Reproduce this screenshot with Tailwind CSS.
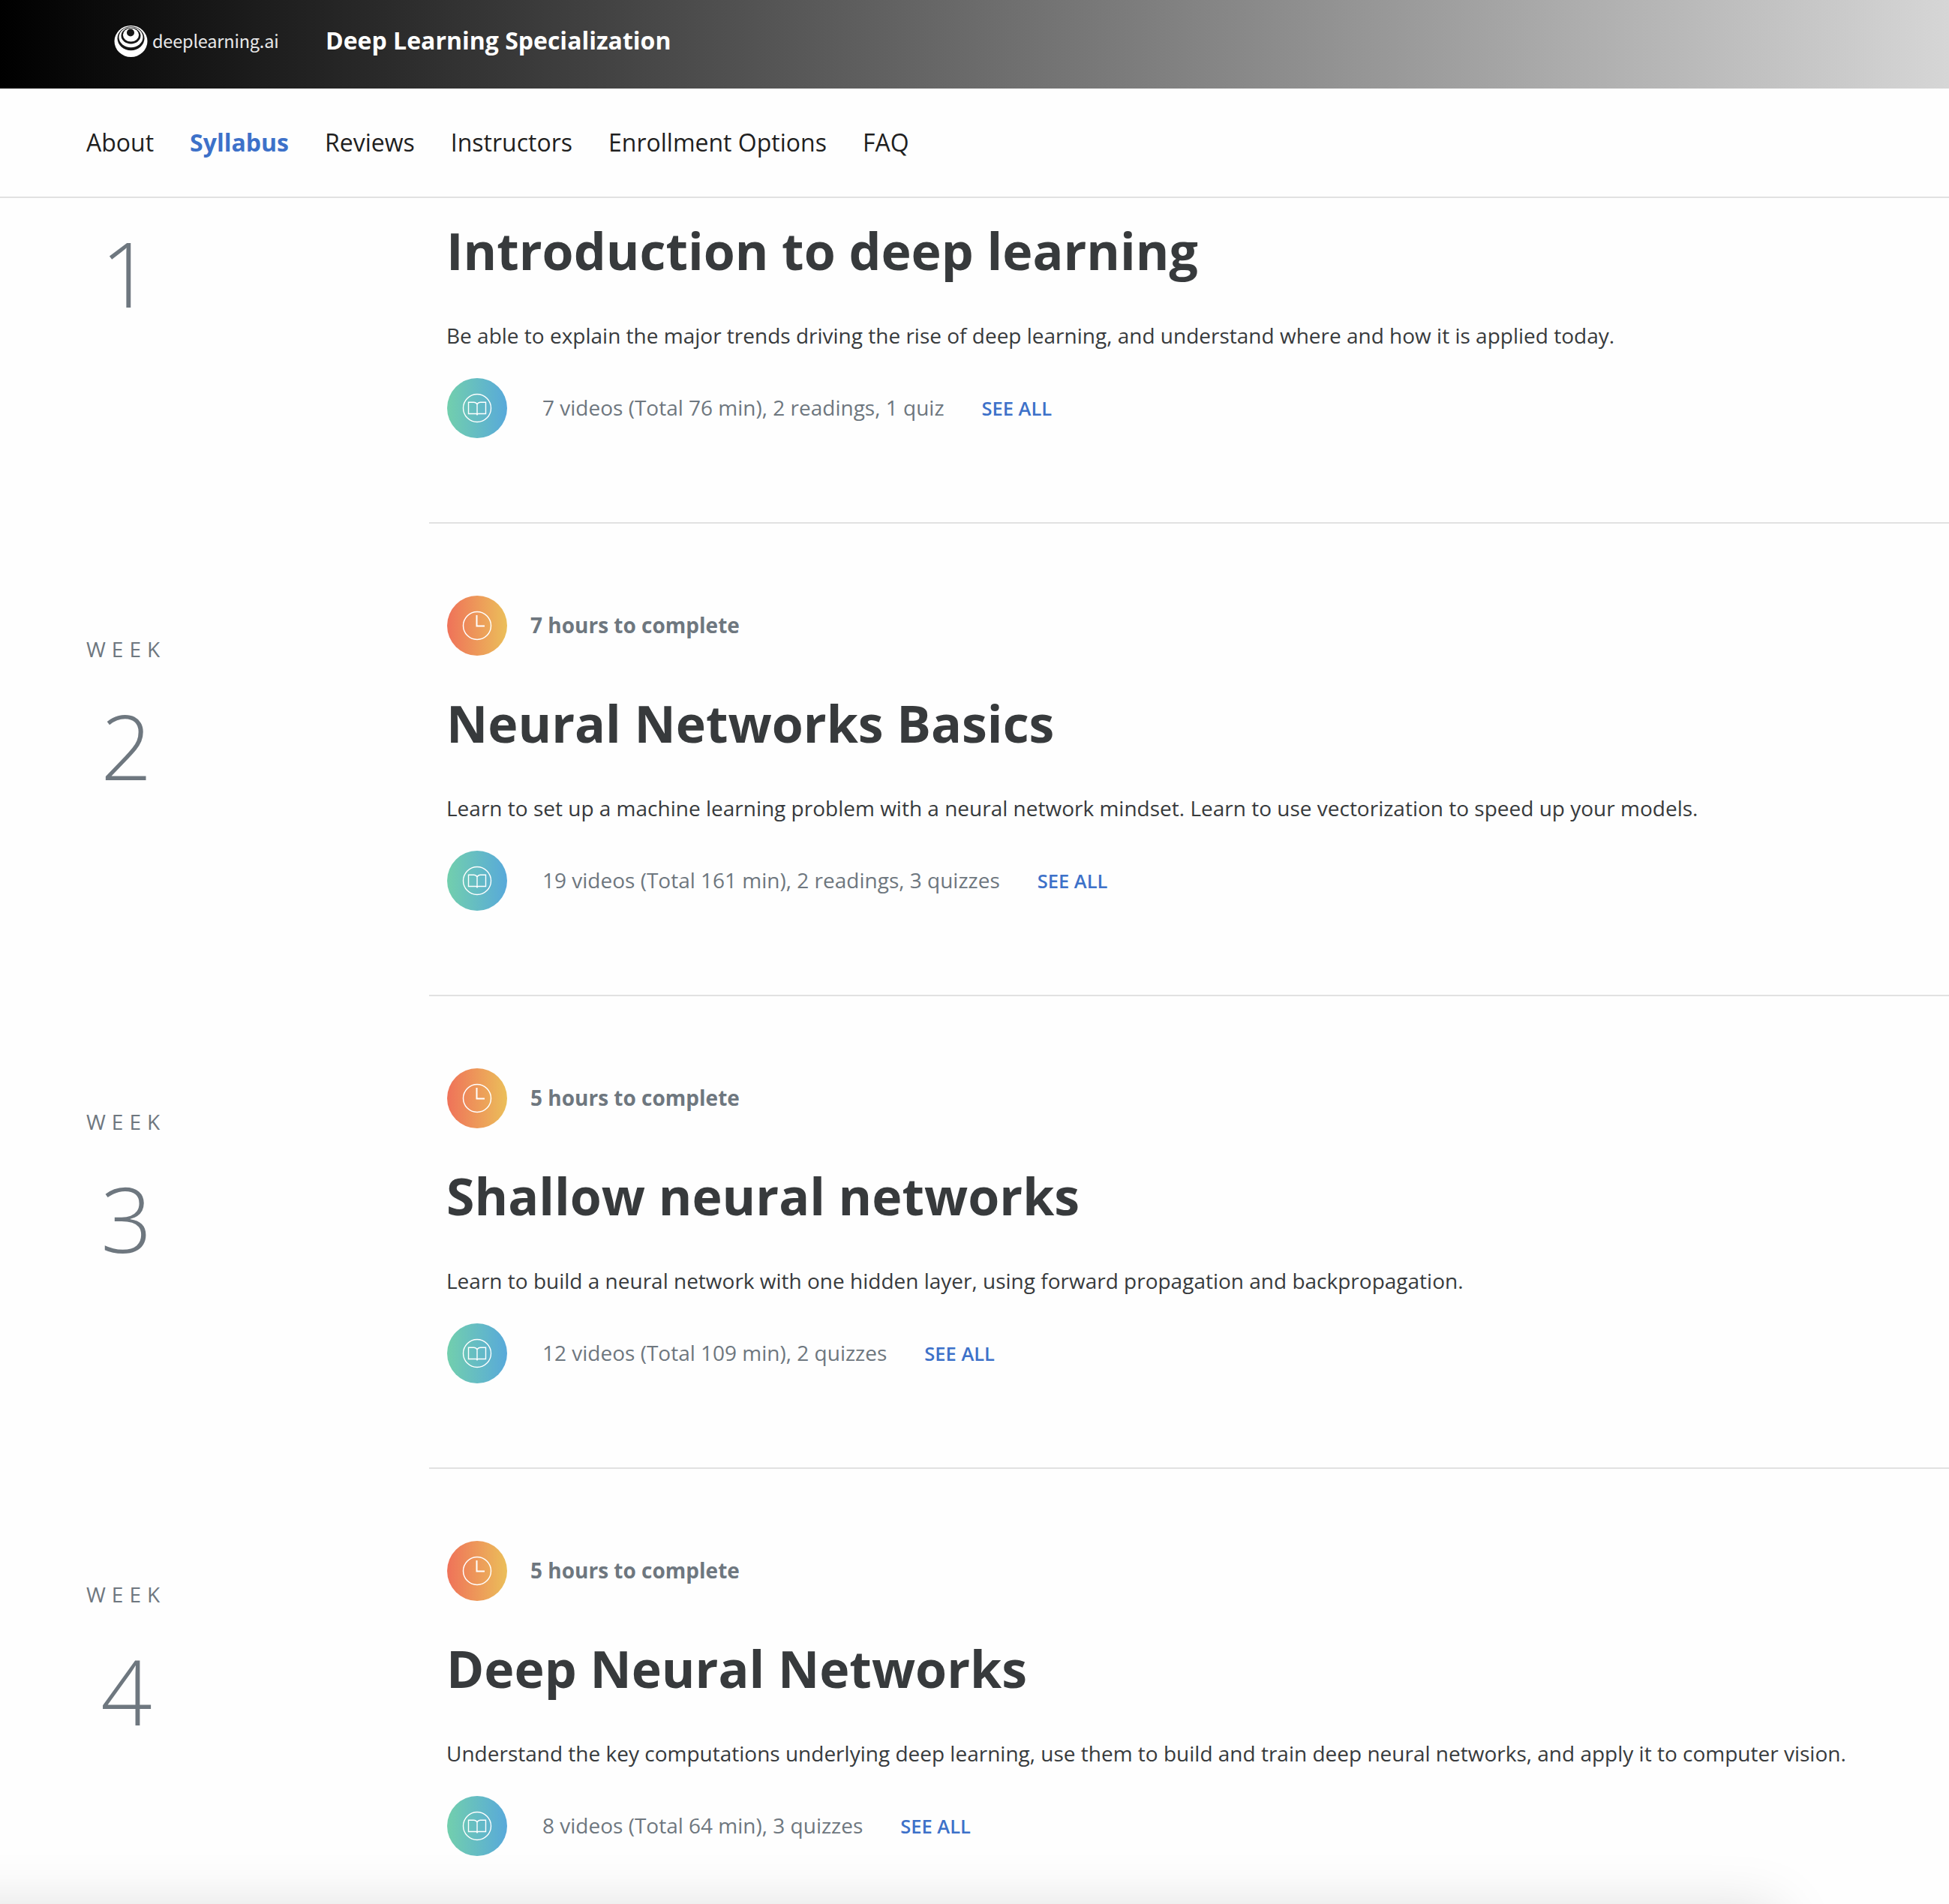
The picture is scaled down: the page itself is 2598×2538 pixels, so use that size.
<!DOCTYPE html>
<html lang="en">
<head>
<meta charset="utf-8">
<title>Deep Learning Specialization</title>
<script src="https://cdn.jsdelivr.net/npm/@tailwindcss/browser@4"></script>
</head>
<body>
<svg class="hidden">
  <symbol id="book" viewBox="0 0 80 80">
    <g fill="none" stroke="#fff" stroke-width="1.4">
      <circle cx="40" cy="40" r="18.5"/>
      <path d="M40 35V49.5M40 35Q38.5 32.2 35.5 32.2H28.5V47.5H38.5Q40 47.5 40 49.5Q40 47.5 41.5 47.5H51.5V32.2H44.5Q41.5 32.2 40 35"/>
    </g>
  </symbol>
  <symbol id="clock" viewBox="0 0 80 80">
    <circle cx="40" cy="40" r="18.5" fill="none" stroke="#fff" stroke-width="1.5"/>
    <path d="M39.5 26V40.5H50" fill="none" stroke="#fff" stroke-width="2"/>
  </symbol>
</svg>

<div class="relative h-[2538px] w-[2598px] overflow-hidden bg-[#fefefe] font-['Open_Sans',sans-serif] text-[28px] leading-[40px] text-[#373a3c]">
<header class="flex h-[118px] items-center bg-linear-to-r/srgb from-black to-[#d6d6d6] pb-[10px] pl-[152px] text-white">
  <svg class="mt-[2px] h-[44px] w-[46px]" viewBox="0 0 46 44">
    <ellipse cx="22.5" cy="22" rx="22" ry="21" fill="#fff"/>
    <ellipse cx="22.5" cy="18.2" rx="18" ry="16" fill="#161616"/>
    <ellipse cx="22.5" cy="16.6" rx="16" ry="13.6" fill="#fff"/>
    <ellipse cx="22.5" cy="14.6" rx="13" ry="10.8" fill="#161616"/>
    <ellipse cx="22.5" cy="13.6" rx="10.6" ry="9" fill="#fff"/>
    <circle cx="22" cy="10.5" r="5" fill="#161616"/>
  </svg>
  <span class="ml-[5px] w-[231px] font-['Noto_Sans_CJK_SC',sans-serif] text-[23.5px] tracking-[-0.2px] text-[#e8e8e8]">deeplearning.ai</span>
  <h1 class="text-[32px] font-bold">Deep Learning Specialization</h1>
</header>

<nav class="flex h-[146px] items-center gap-12 border-b-2 border-[#e1e1e1] pl-[115px] text-[32px] text-[#1f1f1f]">
  <a>About</a><a class="font-bold text-[#3d71c9]">Syllabus</a><a>Reviews</a><a>Instructors</a><a>Enrollment Options</a><a>FAQ</a>
</nav>

<main class="pl-[115px]">
  <section class="flex h-[434px]">
    <div class="flex w-[457px] flex-col pt-[20px]"><div class="w-[107px] text-center text-[120px] leading-[160px] font-light text-[#6e777f]">1</div></div>
    <div class="flex-1 border-b-2 border-[#e1e1e1] pt-[22px] pl-[23px]">
      <h2 class="text-[68px] leading-[96px] font-bold">Introduction to deep learning</h2>
      <p class="mt-[45px]">Be able to explain the major trends driving the rise of deep learning, and understand where and how it is applied today.</p>
      <div class="mt-[37px] ml-px flex items-center text-[#6e777f]"><svg class="size-20 rounded-full bg-linear-to-r/srgb from-[#72cfad] to-[#58a9da]"><use href="#book"/></svg><span class="ml-[47px] pb-[2px]">7 videos (Total 76 min), 2 readings, 1 quiz</span><a class="ml-[50px] text-[25.5px] font-semibold text-[#3d71c9]">SEE ALL</a></div>
    </div>
  </section>

  <section class="flex h-[630px]">
    <div class="flex w-[457px] flex-col pt-[147px] text-[#6e777f]"><div class="tracking-[8px]">WEEK</div><div class="mt-[29px] w-[107px] text-center text-[120px] leading-[160px] font-light">2</div></div>
    <div class="flex-1 border-b-2 border-[#e1e1e1] pt-24 pl-[23px]">
      <div class="ml-px flex items-center font-bold text-[#6e777f]"><svg class="size-20 rounded-full bg-linear-to-r/srgb from-[#ef7259] to-[#ebbf5a]"><use href="#clock"/></svg><span class="ml-[31px] pb-[2px]">7 hours to complete</span></div>
      <h2 class="mt-[42px] text-[68px] leading-[96px] font-bold">Neural Networks Basics</h2>
      <p class="mt-[45px]">Learn to set up a machine learning problem with a neural network mindset. Learn to use vectorization to speed up your models.</p>
      <div class="mt-[37px] ml-px flex items-center text-[#6e777f]"><svg class="size-20 rounded-full bg-linear-to-r/srgb from-[#72cfad] to-[#58a9da]"><use href="#book"/></svg><span class="ml-[47px] pb-[2px]">19 videos (Total 161 min), 2 readings, 3 quizzes</span><a class="ml-[50px] text-[25.5px] font-semibold text-[#3d71c9]">SEE ALL</a></div>
    </div>
  </section>

  <section class="flex h-[630px]">
    <div class="flex w-[457px] flex-col pt-[147px] text-[#6e777f]"><div class="tracking-[8px]">WEEK</div><div class="mt-[29px] w-[107px] text-center text-[120px] leading-[160px] font-light">3</div></div>
    <div class="flex-1 border-b-2 border-[#e1e1e1] pt-24 pl-[23px]">
      <div class="ml-px flex items-center font-bold text-[#6e777f]"><svg class="size-20 rounded-full bg-linear-to-r/srgb from-[#ef7259] to-[#ebbf5a]"><use href="#clock"/></svg><span class="ml-[31px] pb-[2px]">5 hours to complete</span></div>
      <h2 class="mt-[42px] text-[68px] leading-[96px] font-bold">Shallow neural networks</h2>
      <p class="mt-[45px]">Learn to build a neural network with one hidden layer, using forward propagation and backpropagation.</p>
      <div class="mt-[37px] ml-px flex items-center text-[#6e777f]"><svg class="size-20 rounded-full bg-linear-to-r/srgb from-[#72cfad] to-[#58a9da]"><use href="#book"/></svg><span class="ml-[47px] pb-[2px]">12 videos (Total 109 min), 2 quizzes</span><a class="ml-[50px] text-[25.5px] font-semibold text-[#3d71c9]">SEE ALL</a></div>
    </div>
  </section>

  <section class="flex h-[580px]">
    <div class="flex w-[457px] flex-col pt-[147px] text-[#6e777f]"><div class="tracking-[8px]">WEEK</div><div class="mt-[29px] w-[107px] text-center text-[120px] leading-[160px] font-light">4</div></div>
    <div class="flex-1 pt-24 pl-[23px]">
      <div class="ml-px flex items-center font-bold text-[#6e777f]"><svg class="size-20 rounded-full bg-linear-to-r/srgb from-[#ef7259] to-[#ebbf5a]"><use href="#clock"/></svg><span class="ml-[31px] pb-[2px]">5 hours to complete</span></div>
      <h2 class="mt-[42px] text-[68px] leading-[96px] font-bold">Deep Neural Networks</h2>
      <p class="mt-[45px]">Understand the key computations underlying deep learning, use them to build and train deep neural networks, and apply it to computer vision.</p>
      <div class="mt-[37px] ml-px flex items-center text-[#6e777f]"><svg class="size-20 rounded-full bg-linear-to-r/srgb from-[#72cfad] to-[#58a9da]"><use href="#book"/></svg><span class="ml-[47px] pb-[2px]">8 videos (Total 64 min), 3 quizzes</span><a class="ml-[50px] text-[25.5px] font-semibold text-[#3d71c9]">SEE ALL</a></div>
    </div>
  </section>
</main>

<!-- shadow of the panel docked below the fold -->
<div class="absolute top-[2548px] -left-[100px] h-[200px] w-[2470px] shadow-[0_0_80px_rgba(0,0,0,0.15)]"></div>
</div>
</body>
</html>
